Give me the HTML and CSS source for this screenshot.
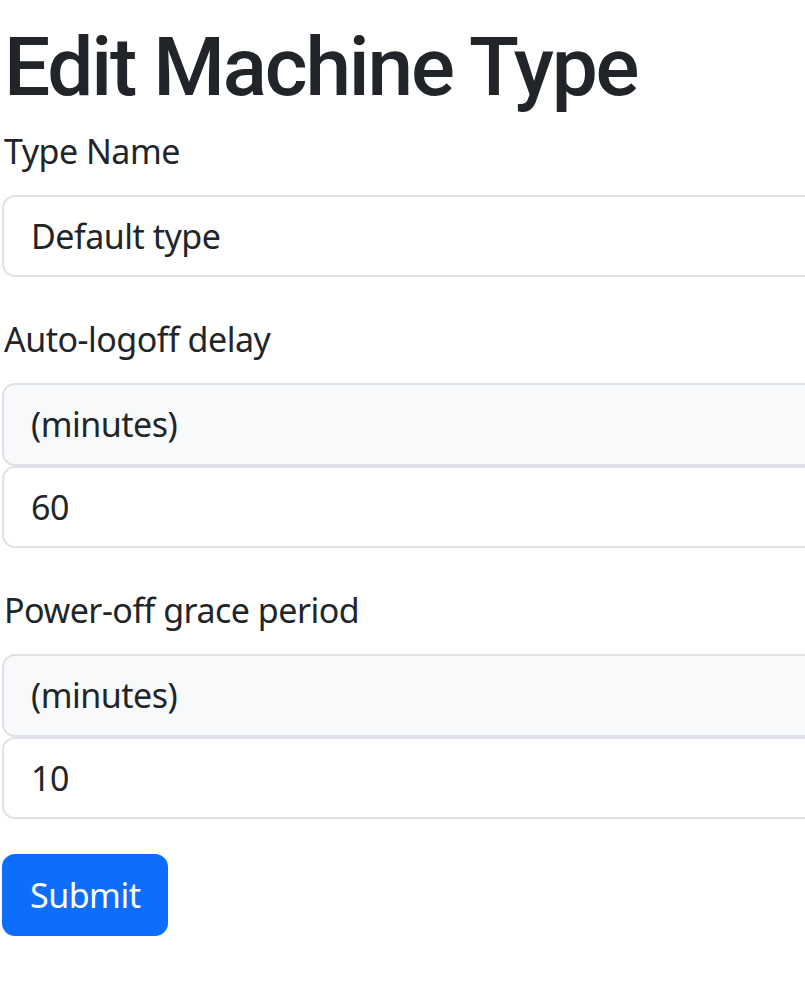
FILE: index.html
```html
<!DOCTYPE html>
<html lang="en">
<head>
<meta charset="utf-8">
<title>Edit Machine Type</title>
<link rel="stylesheet" href="styles.css">
</head>
<body>
<main class="page">
  <h1 class="title">Edit Machine Type</h1>
  <form class="form">
    <div class="field">
      <label class="label" for="typeName">Type Name</label>
      <input class="control" id="typeName" type="text" value="Default type">
    </div>
    <div class="field">
      <label class="label" for="logoff">Auto-logoff delay</label>
      <div class="group">
        <span class="addon">(minutes)</span>
        <input class="control control-joined" id="logoff" type="text" value="60">
      </div>
    </div>
    <div class="field field-last">
      <label class="label" for="grace">Power-off grace period</label>
      <div class="group">
        <span class="addon">(minutes)</span>
        <input class="control control-joined" id="grace" type="text" value="10">
      </div>
    </div>
    <button class="btn" type="submit">Submit</button>
  </form>
</main>
</body>
</html>
```

FILE: styles.css
```css
html, body {
  margin: 0;
  padding: 0;
  overflow-x: hidden;
  background: #ffffff;
}

body {
  font-family: "Noto Sans", "Open Sans", sans-serif;
  color: #212529;
}

.page {
  width: 900px;
  padding: 17px 0 0 2px;
}

.title {
  margin: 0 0 9px 2px;
  font-family: Roboto, "Noto Sans", sans-serif;
  font-size: 82px;
  line-height: 100px;
  font-weight: 500;
  letter-spacing: -2.2px;
}

.form {
  display: flex;
  flex-direction: column;
}

.field {
  display: flex;
  flex-direction: column;
  margin-bottom: 37px;
}

.field-last {
  margin-bottom: 35px;
}

.label {
  font-size: 34px;
  line-height: 51px;
  letter-spacing: -0.5px;
  margin: 0 0 18px 2px;
}

.group {
  display: flex;
  flex-direction: column;
}

.control,
.addon {
  box-sizing: border-box;
  height: 82px;
  width: 100%;
  border: 2px solid #dee2e6;
  border-radius: 13px;
  padding: 0 27px;
  font-family: inherit;
  font-size: 34px;
  line-height: 51px;
  letter-spacing: -0.5px;
  color: #212529;
  background: #ffffff;
  outline: none;
}

.addon {
  display: flex;
  align-items: center;
  height: 83px;
  background: #f8f9fa;
  border-radius: 13px 0 0 13px;
}

.control-joined {
  border-radius: 13px 0 0 13px;
}

.btn {
  align-self: flex-start;
  box-sizing: border-box;
  height: 82px;
  padding: 0 26px;
  border: 2px solid #0d6efd;
  border-radius: 13px;
  background: #0d6efd;
  color: #ffffff;
  font-family: inherit;
  font-size: 34px;
  line-height: 51px;
  letter-spacing: -0.5px;
}
```
